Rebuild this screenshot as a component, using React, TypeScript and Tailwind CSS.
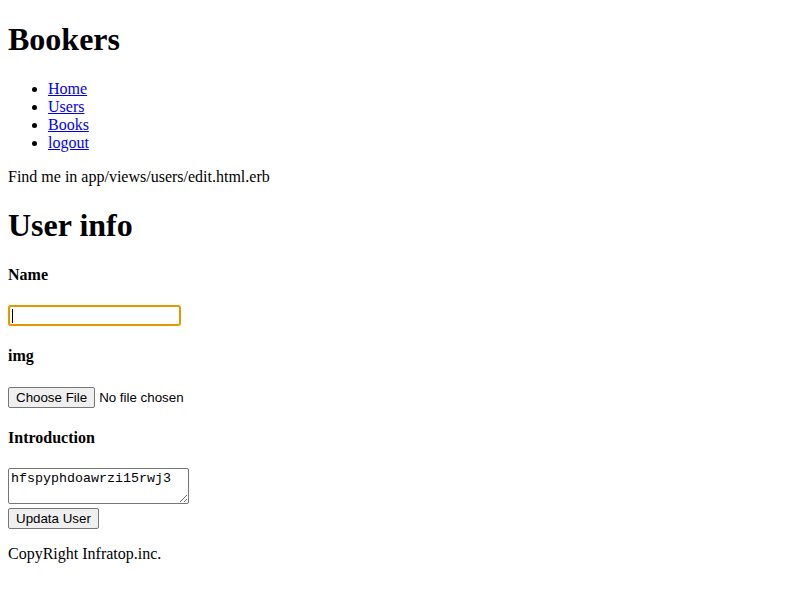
import React from 'react';

const serif = "font-['Liberation_Serif',serif]";
const sans = "font-['Liberation_Sans',Arial,sans-serif]";

export default function App() {
  return (
    <div className={`${serif} text-[16px] leading-[normal] text-black bg-white min-h-[600px] px-[8px] pt-[21.44px] pb-[8px]`}>
      <h1 className="text-[32px] font-bold mb-[21.44px]">Bookers</h1>
      <ul className="list-disc pl-[40px] mb-[16px]">
        <li><a href="#" className="text-[#0000ee] underline">Home</a></li>
        <li><a href="#" className="text-[#0000ee] underline">Users</a></li>
        <li><a href="#" className="text-[#0000ee] underline">Books</a></li>
        <li><a href="#" className="text-[#0000ee] underline">logout</a></li>
      </ul>
      <p className="mb-[21.44px]">Find me in app/views/users/edit.html.erb</p>

      <h1 className="text-[32px] font-bold">User info</h1>

      <form className="flex flex-col items-start">
        <h4 className="text-[16px] font-bold mt-[21.5px] mb-[21.2px]">Name</h4>
        <div className="h-[21px] w-[173px] border-2 border-[#e59700] rounded-[3px] bg-white flex items-center px-[2px]">
          <span className="w-px h-[14px] bg-black" />
        </div>

        <h4 className="text-[16px] font-bold mt-[21.4px] mb-[21.2px]">img</h4>
        <div className={`flex items-center gap-[4px] ${sans} text-[13.33px] h-[21px]`}>
          <span className="h-[21px] px-[7px] flex items-center bg-[#efefef] border border-[#767676] rounded-[2px]">Choose File</span>
          <span>No file chosen</span>
        </div>

        <h4 className="text-[16px] font-bold mt-[21.7px] mb-[20.9px]">Introduction</h4>
        <textarea
          defaultValue="hfspyphdoawrzi15rwj3"
          className="block w-[181px] h-[36px] border border-[#767676] rounded-[2px] p-[2px] font-['Liberation_Mono',monospace] text-[13.33px] leading-[15px] resize"
        />
        <button
          type="button"
          className={`mt-[4px] h-[21px] px-[7px] ${sans} text-[13.33px] bg-[#efefef] border border-[#767676] rounded-[2px] flex items-center`}
        >
          Updata User
        </button>
      </form>

      <p className="mt-[16px]">CopyRight Infratop.inc.</p>
    </div>
  );
}
